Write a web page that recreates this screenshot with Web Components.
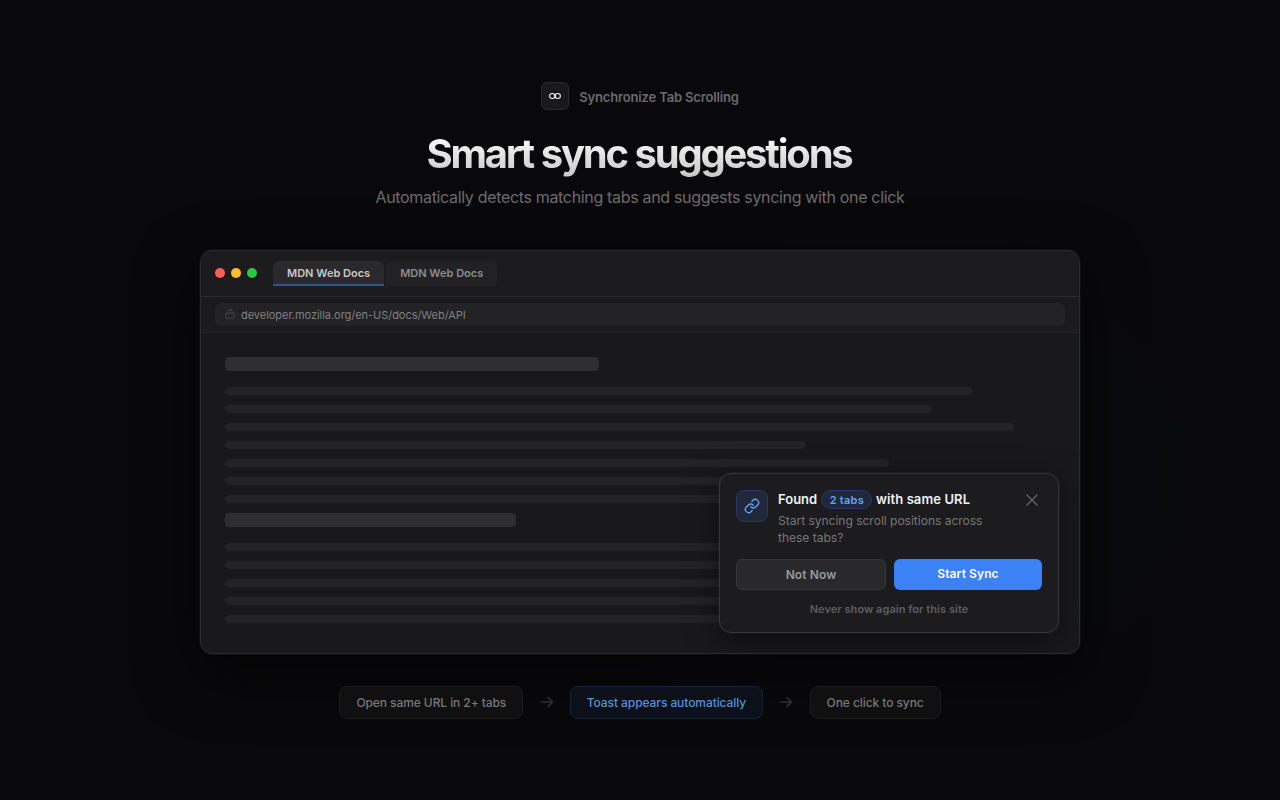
<!DOCTYPE html>
<html lang="en">
<head>
<meta charset="utf-8">
<title>Smart sync suggestions</title>
<style>
	body {
		margin: 0;
		width: 1280px;
		height: 800px;
		overflow: hidden;
		background: #09090b;
		font-family: Inter, "Liberation Sans", sans-serif;
		-webkit-font-smoothing: antialiased;
	}
</style>
</head>
<body>
<promo-page>
	<brand-badge slot="header">Synchronize Tab Scrolling</brand-badge>
	<promo-heading slot="header">
		Smart sync suggestions
		<span slot="subtitle">Automatically detects matching tabs and suggests syncing with one click</span>
	</promo-heading>
	<browser-window url="developer.mozilla.org/en-US/docs/Web/API">
		<browser-tab slot="tabs" active>MDN Web Docs</browser-tab>
		<browser-tab slot="tabs">MDN Web Docs</browser-tab>
		<page-skeleton lines="h45 90 85 95 70 80 88 75 h35 85 92 78 88 70"></page-skeleton>
		<sync-toast slot="toast" count="2 tabs">Start syncing scroll positions across these tabs?</sync-toast>
	</browser-window>
	<step-flow slot="footer">
		<step-pill>Open same URL in 2+ tabs</step-pill>
		<step-arrow></step-arrow>
		<step-pill active>Toast appears automatically</step-pill>
		<step-arrow></step-arrow>
		<step-pill>One click to sync</step-pill>
	</step-flow>
</promo-page>

<script>
class BaseElement extends HTMLElement {
	constructor() {
		super();
		this.attachShadow({ mode: "open" });
	}
	connectedCallback() {
		this.shadowRoot.innerHTML = `
		<style>
		* {
			box-sizing: border-box;
		}
		</style>
		${this.render()}`;
	}
}

class PromoPage extends BaseElement {
	render() {
		return `
		<style>
		:host {
			box-sizing: border-box;
			display: flex;
			flex-direction: column;
			align-items: center;
			height: 800px;
			padding-top: 82px;
			background: radial-gradient(ellipse 600px 400px at 70% 60%, rgba(59, 130, 246, 0.02), transparent 70%), #09090b;
		}
		header {
			display: flex;
			flex-direction: column;
			align-items: center;
			height: 168px;
		}
		/* keeps the steps above the window's shadow */
		footer {
			position: relative;
			margin-top: 32px;
		}
		</style>
		<header><slot name="header"></slot></header>
		<slot></slot>
		<footer><slot name="footer"></slot></footer>`;
	}
}

class BrandBadge extends BaseElement {
	render() {
		return `
		<style>
		:host {
			display: flex;
			align-items: center;
			gap: 10px;
			font-size: 13px;
			font-weight: 600;
			line-height: 16px;
			letter-spacing: -0.16px;
			color: #6a6a6c;
		}
		.logo {
			display: flex;
			align-items: center;
			justify-content: center;
			width: 28px;
			height: 28px;
			border: 1px solid #2a2a2c;
			border-radius: 6px;
			background: #19191b;
		}
		span {
			padding-top: 1px;
		}
		</style>
		<div class="logo">
			<svg width="14" height="8" viewBox="0 0 14 8" fill="none" stroke="#f2f2f2" stroke-width="1.1">
				<ellipse cx="4.3" cy="4" rx="2.7" ry="2.5"/>
				<ellipse cx="9.7" cy="4" rx="2.7" ry="2.5"/>
				<path d="M6.2 2.3 7.9 5.7"/>
			</svg>
		</div>
		<span><slot></slot></span>`;
	}
}

class PromoHeading extends BaseElement {
	render() {
		return `
		<style>
		:host {
			display: block;
			margin-top: 22px;
			text-align: center;
		}
		h1 {
			margin: 0 2px 0 0;
			padding-bottom: 4px;
			font-size: 40px;
			font-weight: 700;
			line-height: 44px;
			letter-spacing: -2.22px;
			word-spacing: 0.5px;
			color: transparent;
			background: linear-gradient(180deg, #fff 0%, #c4c4c4 100%);
			-webkit-background-clip: text;
			background-clip: text;
		}
		p {
			margin: 7px 0 0;
			font-size: 16px;
			line-height: 20px;
			letter-spacing: -0.33px;
			color: #6c6c6e;
		}
		</style>
		<h1><slot></slot></h1>
		<p><slot name="subtitle"></slot></p>`;
	}
}

class BrowserWindow extends BaseElement {
	render() {
		return `
		<style>
		:host {
			box-sizing: border-box;
			position: relative;
			display: block;
			flex: none;
			width: 880px;
			height: 404px;
			border: 1px solid #2c2c2e;
			border-radius: 12px;
			background: #19191b;
			box-shadow: 0 0 0 1px rgba(255, 255, 255, 0.03), 0 20px 60px rgba(0, 0, 0, 0.6);
			overflow: hidden;
		}
		.titlebar {
			display: flex;
			align-items: center;
			gap: 16px;
			height: 46px;
			padding: 0 14px;
			padding-bottom: 1px;
			border-bottom: 1px solid #2a2a2c;
			background: #1c1c1e;
		}
		.lights {
			display: flex;
			gap: 6px;
		}
		.lights i {
			width: 10px;
			height: 10px;
			border-radius: 50%;
		}
		.tabs {
			display: flex;
			gap: 2px;
		}
		.addressbar {
			height: 36px;
			padding: 6px 14px;
			border-bottom: 1px solid #252527;
			background: #1b1b1d;
		}
		.url {
			display: flex;
			align-items: center;
			gap: 6px;
			height: 23px;
			padding: 0 10px;
			border-radius: 6px;
			background: #232325;
			font-size: 11px;
			letter-spacing: -0.04px;
			color: #808082;
		}
		.url svg {
			margin-bottom: 2px;
		}
		.toast {
			position: absolute;
			right: 20px;
			bottom: 20px;
		}
		</style>
		<div class="titlebar">
			<div class="lights">
				<i style="background: #ff5f57"></i>
				<i style="background: #febc2e"></i>
				<i style="background: #28c840"></i>
			</div>
			<div class="tabs"><slot name="tabs"></slot></div>
		</div>
		<div class="addressbar">
			<div class="url">
				<svg width="10" height="10" viewBox="0 0 24 24" fill="none" stroke="#505052" stroke-width="2">
					<rect x="2" y="10" width="20" height="12" rx="2"/>
					<path d="M7 10V6a5 5 0 0 1 10 0v4"/>
				</svg>
				<span>${this.getAttribute("url")}</span>
			</div>
		</div>
		<slot></slot>
		<div class="toast"><slot name="toast"></slot></div>`;
	}
}

class BrowserTab extends BaseElement {
	render() {
		return `
		<style>
		:host {
			box-sizing: border-box;
			display: block;
			height: 25px;
			padding: 5px 14px 0;
			border-radius: 6px 6px 0 0;
			background: #222224;
			font-size: 11px;
			font-weight: 600;
			line-height: 14px;
			color: #8c8c8e;
		}
		:host([active]) {
			background: linear-gradient(#2f5597, #2f5597) bottom / 100% 2px no-repeat, #2a2a2c;
			color: #c8c8c8;
		}
		</style>
		<slot></slot>`;
	}
}

// lines: space separated widths in percent, an "h" prefix makes a heading bar
class PageSkeleton extends BaseElement {
	render() {
		const bars = this.getAttribute("lines").split(" ").map((line) => {
			const heading = line.startsWith("h");
			return `<div class="${heading ? "heading" : "line"}" style="width: ${line.replace("h", "")}%"></div>`;
		}).join("");
		return `
		<style>
		:host {
			display: block;
			padding: 24px;
		}
		.heading {
			height: 14px;
			margin-bottom: 16px;
			border-radius: 4px;
			background: #2f2f31;
		}
		.line {
			height: 8px;
			margin-bottom: 10px;
			border-radius: 4px;
			background: #242426;
		}
		</style>
		${bars}`;
	}
}

class SyncToast extends BaseElement {
	render() {
		return `
		<style>
		:host {
			box-sizing: border-box;
			display: block;
			width: 340px;
			height: 160px;
			padding: 16px;
			border: 1px solid #353537;
			border-radius: 12px;
			background: #1c1c1e;
			box-shadow: 0 0 0 1px rgba(255, 255, 255, 0.03), 0 8px 32px rgba(0, 0, 0, 0.5);
		}
		.top {
			display: flex;
			gap: 10px;
			height: 69px;
		}
		.icon {
			display: flex;
			align-items: center;
			justify-content: center;
			flex: none;
			width: 32px;
			height: 32px;
			border: 1px solid #213b68;
			border-radius: 8px;
			background: #202839;
		}
		.text {
			flex: 1;
		}
		.title {
			display: flex;
			gap: 4px;
			height: 19px;
			font-size: 13px;
			font-weight: 600;
			line-height: 18px;
			white-space: nowrap;
			color: #f0f0f0;
		}
		.title span:last-child {
			letter-spacing: 0.1px;
			margin-left: -0.5px;
		}
		.count {
			height: 19px;
			padding: 0 7.5px;
			border: 1px solid #213b68;
			border-radius: 10px;
			background: #202839;
			font-size: 11px;
			line-height: 18px;
			letter-spacing: 0.25px;
			color: #60a5fa;
		}
		p {
			width: 226px;
			margin: 3px 0 0;
			font-size: 12px;
			line-height: 17px;
			color: #777779;
		}
		.close {
			flex: none;
			margin: 3px 3px 0 0;
		}
		.actions {
			display: flex;
			gap: 8px;
		}
		.btn {
			flex: 1 1 0;
			box-sizing: content-box;
			padding: 7px 0;
			border-radius: 6px;
			font-size: 12px;
			font-weight: 600;
			line-height: 15px;
			letter-spacing: 0.1px;
			text-align: center;
		}
		.secondary {
			border: 1px solid #363638;
			background: #29292b;
			color: #99999b;
		}
		.primary {
			background: #3b82f6;
			color: #fff;
		}
		.never {
			margin-top: 12px;
			font-size: 11px;
			font-weight: 600;
			line-height: 14px;
			letter-spacing: 0.05px;
			text-align: center;
			color: #5e5e60;
		}
		</style>
		<div class="top">
			<div class="icon">
				<svg width="16" height="16" viewBox="0 0 24 24" fill="none" stroke="#60a5fa" stroke-width="2" stroke-linecap="round" stroke-linejoin="round">
					<path d="M10 13a5 5 0 0 0 7.54.54l3-3a5 5 0 0 0-7.07-7.07l-1.72 1.71"/>
					<path d="M14 11a5 5 0 0 0-7.54-.54l-3 3a5 5 0 0 0 7.07 7.07l1.71-1.71"/>
				</svg>
			</div>
			<div class="text">
				<div class="title"><span>Found</span><span class="count">${this.getAttribute("count")}</span><span>with same URL</span></div>
				<p><slot></slot></p>
			</div>
			<svg class="close" width="14" height="14" viewBox="0 0 14 14" stroke="#68686a" stroke-width="1.2" stroke-linecap="round">
				<path d="M2 2l10 10M12 2L2 12"/>
			</svg>
		</div>
		<div class="actions">
			<div class="btn secondary">Not Now</div>
			<div class="btn primary">Start Sync</div>
		</div>
		<div class="never">Never show again for this site</div>`;
	}
}

class StepFlow extends BaseElement {
	render() {
		return `
		<style>
		:host {
			display: flex;
			align-items: center;
			gap: 16px;
		}
		</style>
		<slot></slot>`;
	}
}

class StepPill extends BaseElement {
	render() {
		return `
		<style>
		:host {
			box-sizing: border-box;
			display: block;
			height: 33px;
			padding: 0 16px;
			border: 1px solid #1c1c1e;
			border-radius: 8px;
			background: #101011;
			font-size: 12px;
			font-weight: 500;
			line-height: 31px;
			letter-spacing: -0.08px;
			color: #777779;
		}
		:host([active]) {
			border-color: #132544;
			background: #0c1019;
			color: #5290dc;
		}
		</style>
		<slot></slot>`;
	}
}

class StepArrow extends BaseElement {
	render() {
		return `
		<style>
		:host {
			display: flex;
			justify-content: center;
			width: 14.5px;
			padding-bottom: 2px;
		}
		svg {
			flex: none;
		}
		</style>
		<svg width="16" height="16" viewBox="0 0 16 16" fill="none" stroke="#303032" stroke-width="1.6" stroke-linecap="round" stroke-linejoin="round">
			<path d="M2.5 8h11M9 3.5 13.5 8 9 12.5"/>
		</svg>`;
	}
}

customElements.define("promo-page", PromoPage);
customElements.define("brand-badge", BrandBadge);
customElements.define("promo-heading", PromoHeading);
customElements.define("browser-window", BrowserWindow);
customElements.define("browser-tab", BrowserTab);
customElements.define("page-skeleton", PageSkeleton);
customElements.define("sync-toast", SyncToast);
customElements.define("step-flow", StepFlow);
customElements.define("step-pill", StepPill);
customElements.define("step-arrow", StepArrow);
</script>
</body>
</html>
